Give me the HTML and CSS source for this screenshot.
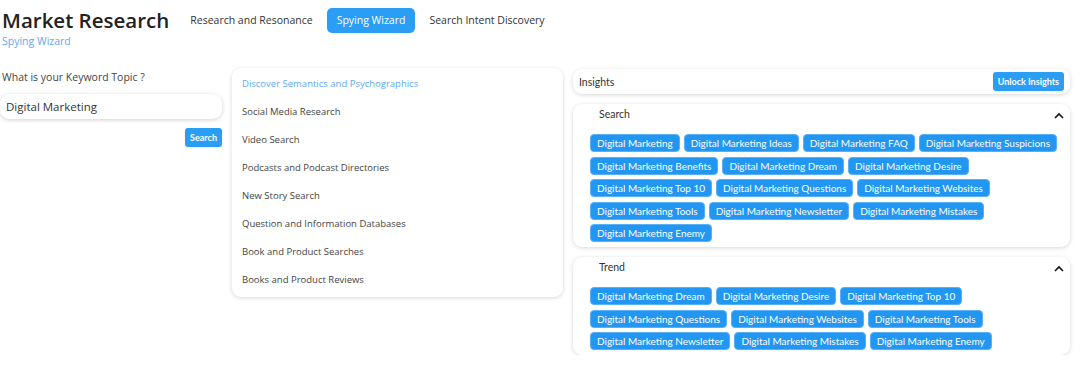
FILE: index.html
```html
<!DOCTYPE html>
<html lang="en">
<head>
    <meta charset="UTF-8">
    <meta name="viewport" content="width=device-width, initial-scale=1.0">
    <title>Market Research - Spying Wizard</title>
    <link rel="stylesheet" href="styles.css">
</head>
<body>

    <div class="header">
        <div class="brand">
            <h1>Market Research</h1>
            <div class="subtitle">Spying Wizard</div>
        </div>
        <div class="nav">
            <a href="#">Research and Resonance</a>
            <a href="#" class="active">Spying Wizard</a>
            <a href="#">Search Intent Discovery</a>
        </div>
    </div>

    <div class="main">
        <!-- Keyword input -->
        <div class="keyword">
            <label>What is your Keyword Topic ?</label>
            <input type="text" class="keyword-input" value="Digital Marketing">
            <div class="keyword-actions">
                <button class="small-btn">Search</button>
            </div>
        </div>

        <!-- Source list -->
        <div class="sources card">
            <div class="source active">Discover Semantics and Psychographics</div>
            <div class="source">Social Media Research</div>
            <div class="source">Video Search</div>
            <div class="source">Podcasts and Podcast Directories</div>
            <div class="source">New Story Search</div>
            <div class="source">Question and Information Databases</div>
            <div class="source">Book and Product Searches</div>
            <div class="source">Books and Product Reviews</div>
        </div>

        <!-- Insights -->
        <div class="insights">
            <div class="card insights-bar">
                <span>Insights</span>
                <button class="small-btn">Unlock Insights</button>
            </div>

            <div class="card panel">
                <div class="panel-head">
                    <span>Search</span>
                    <svg class="chevron" width="10" height="7" viewBox="0 0 10 7"><path d="M1 6 L5 2 L9 6" fill="none" stroke="#111" stroke-width="1.6"/></svg>
                </div>
                <div class="chips">
                    <span class="chip">Digital Marketing</span>
                    <span class="chip">Digital Marketing Ideas</span>
                    <span class="chip">Digital Marketing FAQ</span>
                    <span class="chip">Digital Marketing Suspicions</span>
                    <span class="chip">Digital Marketing Benefits</span>
                    <span class="chip">Digital Marketing Dream</span>
                    <span class="chip">Digital Marketing Desire</span>
                    <span class="chip">Digital Marketing Top 10</span>
                    <span class="chip">Digital Marketing Questions</span>
                    <span class="chip">Digital Marketing Websites</span>
                    <span class="chip">Digital Marketing Tools</span>
                    <span class="chip">Digital Marketing Newsletter</span>
                    <span class="chip">Digital Marketing Mistakes</span>
                    <span class="chip">Digital Marketing Enemy</span>
                </div>
            </div>

            <div class="card panel">
                <div class="panel-head">
                    <span>Trend</span>
                    <svg class="chevron" width="10" height="7" viewBox="0 0 10 7"><path d="M1 6 L5 2 L9 6" fill="none" stroke="#111" stroke-width="1.6"/></svg>
                </div>
                <div class="chips">
                    <span class="chip">Digital Marketing Dream</span>
                    <span class="chip">Digital Marketing Desire</span>
                    <span class="chip">Digital Marketing Top 10</span>
                    <span class="chip">Digital Marketing Questions</span>
                    <span class="chip">Digital Marketing Websites</span>
                    <span class="chip">Digital Marketing Tools</span>
                    <span class="chip">Digital Marketing Newsletter</span>
                    <span class="chip">Digital Marketing Mistakes</span>
                    <span class="chip">Digital Marketing Enemy</span>
                </div>
            </div>
        </div>
    </div>

</body>
</html>
```
FILE: styles.css
```css
body {
    font-family: 'Open Sans', Arial, sans-serif;
    margin: 0;
    padding: 0;
    background: #fff;
    color: #333;
}

.header {
    display: flex;
    align-items: flex-start;
    padding: 8px 0 0 2px;
}

.brand h1 {
    margin: 0;
    font-size: 20.5px;
    font-weight: 600;
    line-height: 24px;
    color: #222;
}

.subtitle {
    font-size: 10.5px;
    color: #5ea9f4;
    margin-top: 2px;
}

.nav {
    display: flex;
    align-items: center;
    margin-left: 13px;
}

.nav a {
    font-size: 10.5px;
    color: #333;
    text-decoration: none;
    padding: 0 8px;
    height: 25px;
    line-height: 25px;
}

.nav a.active {
    background-color: #2a9df4;
    color: #fff;
    border-radius: 5px;
    padding: 0 10px;
    margin: 0 6px;
}

.main {
    display: grid;
    grid-template-columns: 222px 331px 497px;
    gap: 10px;
    margin-top: 20px;
}

.card {
    background: #fff;
    border-radius: 9px;
    box-shadow: 0 1px 4px rgba(0, 0, 0, 0.16);
}

/* Keyword column */
.keyword {
    padding-top: 2px;
}

.keyword label {
    display: block;
    font-size: 10.5px;
    color: #444;
    margin: 0 0 10px 2px;
}

.keyword-input {
    display: block;
    width: 100%;
    box-sizing: border-box;
    height: 25px;
    border: none;
    border-radius: 9px;
    box-shadow: 0 1px 4px rgba(0, 0, 0, 0.18);
    padding: 0 6px;
    font-family: 'Open Sans', Arial, sans-serif;
    font-size: 11.5px;
    color: #333;
    outline: none;
}

.keyword-actions {
    display: flex;
    justify-content: flex-end;
    margin-top: 9px;
}

.small-btn {
    background-color: #2a9df4;
    border: none;
    border-radius: 3px;
    color: #fff;
    font-family: Lato, 'Open Sans', Arial, sans-serif;
    font-size: 9px;
    font-weight: 700;
    padding: 0 5px;
    height: 19px;
    cursor: pointer;
}

/* Sources list */
.sources {
    padding: 7px 10px 2px;
    height: 229px;
    box-sizing: border-box;
}

.source {
    font-size: 9.5px;
    color: #444;
    height: 28px;
    line-height: 18px;
}

.source.active {
    color: #5ea9f4;
}

/* Insights column */
.insights {
    display: flex;
    flex-direction: column;
    gap: 10px;
    padding-top: 1px;
    font-family: Lato, 'Open Sans', Arial, sans-serif;
}

.insights-bar {
    display: flex;
    justify-content: space-between;
    align-items: center;
    height: 25px;
    padding: 0 6px;
    font-size: 10.5px;
    color: #333;
}

.panel {
    padding: 0 3px 5px 17px;
}

.panel-head {
    display: flex;
    justify-content: space-between;
    align-items: center;
    height: 20px;
    padding: 0 3px 0 9px;
    font-size: 10.5px;
    color: #333;
}

.chevron {
    margin-top: 3px;
}

.chips {
    display: flex;
    flex-wrap: wrap;
    gap: 4.5px 4px;
    margin-top: 10px;
}

.chip {
    background-color: #2196f3;
    border: 1px solid #5ab0f6;
    border-radius: 4px;
    color: #fff;
    font-size: 10px;
    height: 16px;
    line-height: 16px;
    padding: 0 6px;
}
```
